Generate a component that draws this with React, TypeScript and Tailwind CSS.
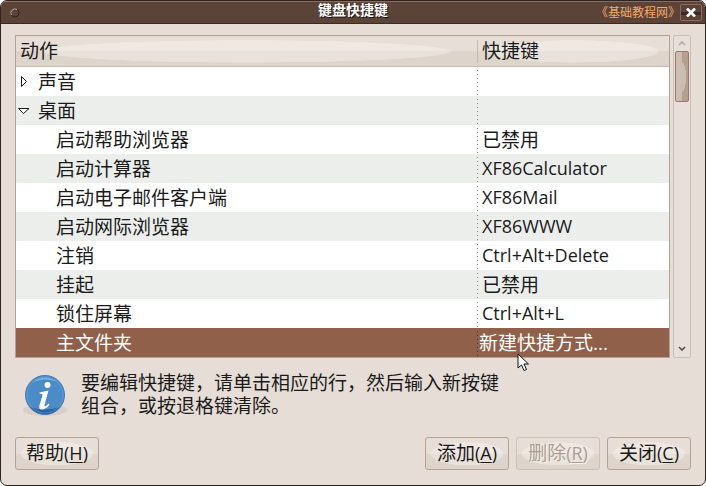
import React, { useState } from 'react';
import clsx from 'clsx';

type Shortcut = {
  id: string;
  action: string;
  keys: string;
};

const SHORTCUTS: Shortcut[] = [
  { id: 'help', action: '启动帮助浏览器', keys: '已禁用' },
  { id: 'calculator', action: '启动计算器', keys: 'XF86Calculator' },
  { id: 'mail', action: '启动电子邮件客户端', keys: 'XF86Mail' },
  { id: 'web', action: '启动网际浏览器', keys: 'XF86WWW' },
  { id: 'logout', action: '注销', keys: 'Ctrl+Alt+Delete' },
  { id: 'suspend', action: '挂起', keys: '已禁用' },
  { id: 'lock', action: '锁住屏幕', keys: 'Ctrl+Alt+L' },
  { id: 'home', action: '主文件夹', keys: '新建快捷方式...' }
];

// Dotted line between the two columns
const DOTTED =
  'bg-[repeating-linear-gradient(to_bottom,transparent_0_3px,#8a8a88_3px_4px)] bg-[length:1px_100%] bg-no-repeat';
const DOTTED_ACTIVE =
  'bg-[repeating-linear-gradient(to_bottom,transparent_0_3px,#4e3428_3px_4px)] bg-[length:1px_100%] bg-no-repeat';

// Human theme gloss: light oval over a two-tone background
const GLOSS =
  'bg-[radial-gradient(closest-side,rgba(255,250,246,0.35)_96%,transparent),linear-gradient(#e7ded8_50%,#ddd5cc_50%)] bg-[length:90%_76%,100%_100%] bg-center bg-no-repeat';

function TitleBar() {
  return (
    <header className="h-[23px] grid grid-cols-[1fr_auto_1fr] items-center bg-[#5c4338] border-t border-[#8d6c5e] border-b border-b-[#3a2a23]">
      <button aria-label="菜单" className="justify-self-start ml-[9px]">
        <svg width="10" height="10" viewBox="0 0 10 10" fill="none">
          <circle cx="5" cy="5" r="4" stroke="#2e211c" />
          <path d="M1.500 7A4 4 0 0 1 7 1.500" stroke="#c9b5ab" />
        </svg>
      </button>
      <h1 className="self-start text-[14px] leading-[16px] font-bold text-white [text-shadow:1px_1px_0_#1c1310]">键盘快捷键</h1>
      <div className="flex justify-end items-center pr-[3px]">
        <span className="text-[12px] leading-[20px] text-[#f2aa6b]">《基础教程网》</span>
        <CloseButton />
      </div>
    </header>
  );
}

function CloseButton() {
  return (
    <button
      aria-label="关闭窗口"
      className="w-[22px] h-[17px] flex items-center justify-center rounded-[2px] border border-[#8d6c5e] bg-[linear-gradient(#5c4338_50%,#3a2a23_50%_70%,#5c4338_70%)]"
    >
      <svg width="10" height="9" viewBox="0 0 10 9" stroke="#fff" strokeWidth="2.6">
        <path d="M1 0.500L9 8.500M9 0.500L1 8.500" />
      </svg>
    </button>
  );
}

function Expander({ open }: { open: boolean }) {
  return (
    <svg width="13" height="13" viewBox="0 0 13 13" fill="#fff" stroke="#1a1a1a" className="shrink-0">
      {open ? <path d="M1.5 3.5H12L6.5 8.5Z" /> : <path d="M4.5 0.500V10.500L9.5 5.500Z" />}
    </svg>
  );
}

function GroupRow({ name, open, onToggle }: { name: string; open: boolean; onToggle: () => void }) {
  return (
    <tr className="h-[29px] odd:bg-white even:bg-[#eceeec]">
      <td className="p-0 pt-[2px]">
        <button onClick={onToggle} aria-expanded={open} className="flex items-center gap-[8px] pl-[1px]">
          <Expander open={open} />
          {name}
        </button>
      </td>
      <td className={clsx('p-0', DOTTED)} />
    </tr>
  );
}

function ScrollBar() {
  return (
    <div className="w-[18px] flex flex-col items-center rounded-[2px] border border-[#c9beb5] bg-[#e7dfd9]">
      <button aria-label="向上滚动" className="h-[15px] flex items-center">
        <svg width="8" height="5" viewBox="0 0 8 5" fill="none" stroke="#b5a79c" strokeWidth="1.6">
          <path d="M1 4L4 1L7 4" />
        </svg>
      </button>
      <div className="w-[14px] h-[51px] rounded-[2px] border border-[#9a7a69] bg-[radial-gradient(closest-side,#cbbdb2_96%,transparent),linear-gradient(to_right,#cbbdb2_50%,#b5a090_50%)] bg-[length:8px_30px,100%_100%] bg-center bg-no-repeat" />
      <button aria-label="向下滚动" className="h-[17px] mt-auto flex items-center">
        <svg width="8" height="5" viewBox="0 0 8 5" fill="none" stroke="#5a4a41" strokeWidth="1.6">
          <path d="M1 1L4 4L7 1" />
        </svg>
      </button>
    </div>
  );
}

function InfoIcon() {
  return (
    <svg width="46" height="46" viewBox="0 0 46 46" className="shrink-0">
      <ellipse cx="23" cy="38" rx="22" ry="6" fill="#d8cfc8" />
      <circle cx="23" cy="23" r="19.5" fill="#4a8bc8" stroke="#4878ae" />
      <path d="M8 35A19 19 0 0 0 38 35Q23 40 8 35Z" fill="#2d62a8" />
      <path d="M11 10A18 18 0 0 1 35 10Q23 5 11 10Z" fill="#74b2df" />
      <circle cx="23" cy="23" r="18" fill="none" stroke="#72abdc" strokeOpacity="0.5" />
      <circle cx="25.5" cy="13" r="3" fill="#fff" />
      <path
        d="M17.500 20.500L26.500 18.500L22.500 33Q22 35 24 34L26.500 31.500L27.500 32.500Q24 37.500 19.500 37.500Q16.500 37.500 17.500 33L20.500 23.500Q21 21.500 17.500 21.500Z"
        fill="#fff"
      />
    </svg>
  );
}

function Cursor() {
  return (
    <svg width="13" height="19" viewBox="0 0 13 19" className="absolute left-[40px] top-[25px] pointer-events-none">
      <path d="M1 1V15L4.500 12L7 17.500L9.500 16.500L7 11H11.500Z" fill="#fff" stroke="#111" />
    </svg>
  );
}

function DialogButton({ label, accel, disabled }: { label: string; accel: string; disabled?: boolean }) {
  return (
    <button
      disabled={disabled}
      className={clsx(
        'w-[84px] h-[33px] rounded-[3px] border border-[#b5a294]',
        GLOSS,
        'disabled:border-[#cdc1b8] disabled:text-[#a99d93] disabled:[text-shadow:1px_1px_0_#f7f2ee]'
      )}
    >
      {label}
      <span className="text-[18px]">
        (<span className="underline underline-offset-2">{accel}</span>)
      </span>
    </button>
  );
}

export default function App() {
  const [soundOpen, setSoundOpen] = useState(false);
  const [desktopOpen, setDesktopOpen] = useState(true);
  const [selected, setSelected] = useState('home');

  return (
    <div className="w-full overflow-hidden rounded-[7px] border border-[#2f2420] bg-[#e6ddd7] text-[19px] leading-[23px] text-[#1a1a1a] select-none font-['Open_Sans','Noto_Sans_CJK_SC',sans-serif]">
      <TitleBar />

      <main className="px-[14px] pt-[11px] pb-[15px]">
        <div className="flex gap-[3px]">
          <div className="flex-1 border border-[#b5a294] bg-white">
            <table className="w-full table-fixed border-separate border-spacing-0 text-left">
              <colgroup>
                <col />
                <col className="w-[192px]" />
              </colgroup>
              <thead>
                <tr className="h-[31px]">
                  <th className={clsx('p-0 pl-[4px] font-normal border-b border-[#c9b9ac]', GLOSS)}>动作</th>
                  <th className={clsx('p-0 font-normal border-b border-[#c9b9ac]', GLOSS)}>
                    <div className="border-l border-[#c9b9ac] pl-[4px]">快捷键</div>
                  </th>
                </tr>
              </thead>
              <tbody>
                <GroupRow name="声音" open={soundOpen} onToggle={() => setSoundOpen(!soundOpen)} />
                <GroupRow name="桌面" open={desktopOpen} onToggle={() => setDesktopOpen(!desktopOpen)} />
                {desktopOpen &&
                  SHORTCUTS.map((item) => {
                    const active = item.id === selected;
                    return (
                      <tr
                        key={item.id}
                        onClick={() => setSelected(item.id)}
                        className={clsx('h-[29px]', active ? 'bg-[#91604a] text-white' : 'odd:bg-white even:bg-[#eceeec]')}
                      >
                        <td className="p-0 pt-[2px] pl-[40px]">{item.action}</td>
                        <td
                          className={clsx(
                            'relative p-0',
                            active ? 'pl-[2px]' : 'pl-[5px]',
                            active ? DOTTED_ACTIVE : DOTTED,
                            /^[A-Z]/.test(item.keys) ? 'text-[18px]' : 'pt-[2px]'
                          )}
                        >
                          {item.keys}
                          {active && <Cursor />}
                        </td>
                      </tr>
                    );
                  })}
              </tbody>
            </table>
          </div>
          <ScrollBar />
        </div>

        <div className="mt-[14px] flex items-center gap-[13px] pl-[7px]">
          <InfoIcon />
          <p className="max-w-[430px]">要编辑快捷键，请单击相应的行，然后输入新按键组合，或按退格键清除。</p>
        </div>

        <footer className="mt-[19px] flex gap-[7px]">
          <DialogButton label="帮助" accel="H" />
          <div className="flex-1" />
          <DialogButton label="添加" accel="A" />
          <DialogButton label="删除" accel="R" disabled />
          <DialogButton label="关闭" accel="C" />
        </footer>
      </main>
    </div>
  );
}
